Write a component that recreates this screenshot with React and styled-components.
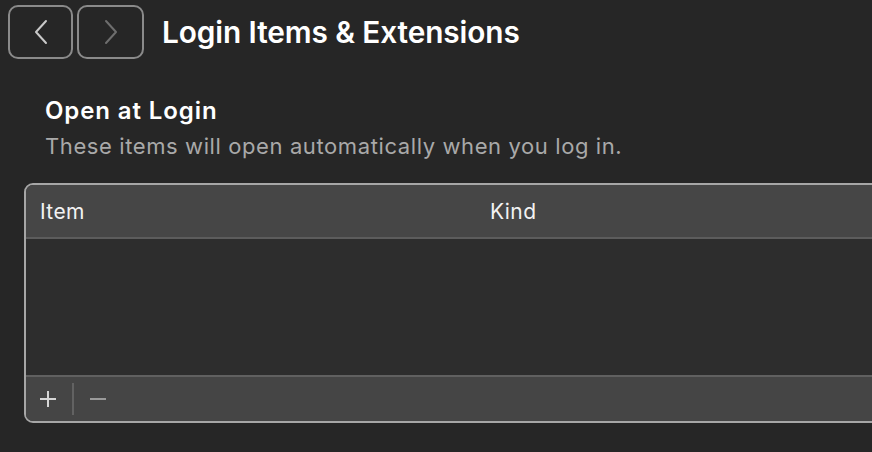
import React from 'react'
import styled, { createGlobalStyle } from 'styled-components'

const GlobalStyle = createGlobalStyle`
  html, body {
    margin: 0;
    padding: 0;
    background: #262626;
    overflow: hidden;
  }
  body {
    font-family: Inter, 'Noto Sans', 'Liberation Sans', sans-serif;
    -webkit-font-smoothing: antialiased;
  }
`

const Page = styled.div`
  width: 872px;
  height: 452px;
  overflow: hidden;
  background: #262626;
`

const Toolbar = styled.div`
  display: flex;
  align-items: center;
  padding: 5px 0 0 8px;
  height: 54px;
`

const NavGroup = styled.div`
  display: flex;
  gap: 4px;
`

const NavButton = styled.button`
  width: ${(p) => p.$width}px;
  height: 54px;
  border: 2px solid #8a8a8a;
  border-radius: 10px;
  background: transparent;
  display: flex;
  align-items: center;
  justify-content: center;
  padding: 0;
  color: ${(p) => (p.$disabled ? '#6e6e6e' : '#c9c9c9')};
`

const Title = styled.h1`
  margin: 0 0 0 18px;
  font-size: 29.8px;
  font-weight: 600;
  color: #ffffff;
  letter-spacing: -0.1px;
`

const Section = styled.div`
  padding: 37px 0 0 45px;
`

const Heading = styled.h2`
  margin: 0;
  font-size: 24px;
  font-weight: 600;
  color: #ffffff;
  line-height: 30px;
  letter-spacing: 0.9px;
`

const Subtitle = styled.p`
  margin: 6px 0 0;
  font-size: 22px;
  color: #a9a9a9;
  line-height: 28px;
  letter-spacing: 0.6px;
`

const Table = styled.div`
  margin: 23px -20px 0 24px;
  border: 2px solid #a6a6a6;
  border-radius: 9px;
  overflow: hidden;
  background: #2d2d2d;
`

const HeaderRow = styled.div`
  display: grid;
  grid-template-columns: 450px 1fr;
  height: 52px;
  align-items: center;
  background: #464646;
  border-bottom: 2px solid #5c5c5c;
`

const HeaderCell = styled.div`
  padding-left: 14px;
  font-size: 21px;
  color: #f2f2f2;
  letter-spacing: 0.4px;
`

const Body = styled.div`
  height: 136px;
`

const Footer = styled.div`
  display: flex;
  align-items: center;
  height: 44px;
  background: #454545;
  border-top: 2px solid #606060;
  padding-left: 10px;
`

const FooterButton = styled.div`
  width: 24px;
  height: 24px;
  display: flex;
  align-items: center;
  justify-content: center;
  color: ${(p) => (p.$dim ? '#9a9a9a' : '#d6d6d6')};
`

const Divider = styled.div`
  width: 2px;
  height: 32px;
  background: #626262;
  margin: 0 12px 0 12px;
`

const Chevron = ({ dir }) => (
  <svg width="18" height="26" viewBox="0 0 18 26" fill="none">
    <path
      d={dir === 'left' ? 'M14 2 L4 13 L14 24' : 'M4 2 L14 13 L4 24'}
      stroke="currentColor"
      strokeWidth="2"
      strokeLinecap="round"
      strokeLinejoin="round"
    />
  </svg>
)

const Plus = () => (
  <svg width="18" height="18" viewBox="0 0 18 18">
    <path d="M9 1 V17 M1 9 H17" stroke="currentColor" strokeWidth="2" />
  </svg>
)

const Minus = () => (
  <svg width="18" height="18" viewBox="0 0 18 18">
    <path d="M1 9 H17" stroke="currentColor" strokeWidth="2" />
  </svg>
)

export default function App() {
  return (
    <Page>
      <GlobalStyle />
      <Toolbar>
        <NavGroup>
          <NavButton $width={65}>
            <Chevron dir="left" />
          </NavButton>
          <NavButton $width={67} $disabled>
            <Chevron dir="right" />
          </NavButton>
        </NavGroup>
        <Title>Login Items &amp; Extensions</Title>
      </Toolbar>
      <Section>
        <Heading>Open at Login</Heading>
        <Subtitle>These items will open automatically when you log in.</Subtitle>
      </Section>
      <Table>
        <HeaderRow>
          <HeaderCell>Item</HeaderCell>
          <HeaderCell>Kind</HeaderCell>
        </HeaderRow>
        <Body />
        <Footer>
          <FooterButton>
            <Plus />
          </FooterButton>
          <Divider />
          <FooterButton $dim>
            <Minus />
          </FooterButton>
        </Footer>
      </Table>
    </Page>
  )
}
